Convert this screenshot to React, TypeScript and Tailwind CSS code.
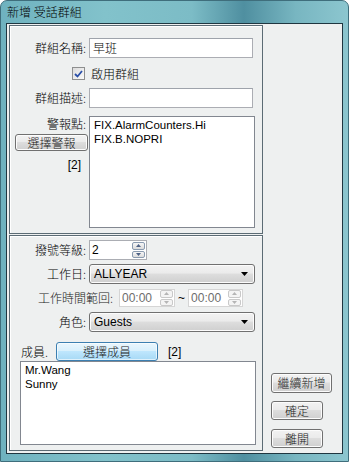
import React from 'react'

const cjk = { fontFamily: '"Noto Sans CJK TC", "Liberation Sans", sans-serif' }
const latin = { fontFamily: '"Liberation Sans", "Noto Sans CJK TC", sans-serif' }

function Btn({ children, className = '', focus = false }: { children: React.ReactNode; className?: string; focus?: boolean }) {
    return (
        <div
            className={
                'shrink-0 flex items-center justify-center rounded-[3px] border text-[12px] font-light text-[#1a1a1a] ' +
                (focus
                    ? 'border-[#3c7fb1] bg-[linear-gradient(#eaf6fd_0%,#d9f0fc_45%,#bee6fd_50%,#a7d9f5_100%)] shadow-[inset_0_0_0_1px_#ffffffa0] '
                    : 'border-[#707070] bg-[linear-gradient(#f2f2f2_0%,#ebebeb_45%,#dddddd_50%,#cfcfcf_100%)] shadow-[inset_0_0_0_1px_#fcfcfc] ') +
                className
            }
            style={cjk}
        >
            {children}
        </div>
    )
}

function Combo({ value }: { value: string }) {
    return (
        <div className="w-[166px] h-[20px] rounded-[3px] border border-[#707070] bg-[linear-gradient(#f2f2f2_0%,#ebebeb_45%,#dddddd_50%,#cfcfcf_100%)] shadow-[inset_0_0_0_1px_#fcfcfc] flex items-center pl-[4px] pr-[6px]">
            <span className="flex-1 text-[12px] text-black" style={latin}>{value}</span>
            <svg width="7" height="4" viewBox="0 0 7 4"><path d="M0 0h7L3.5 4z" fill="#000" /></svg>
        </div>
    )
}

function Spin({ disabled = false }: { disabled?: boolean }) {
    const c = disabled ? '#b5b5b5' : '#4d6185'
    const bg = disabled ? 'bg-[#f4f4f4] border-[#c9c9c9]' : 'bg-[linear-gradient(#f6f6f6,#dcdcdc)] border-[#8a9bb0]'
    return (
        <div className="flex flex-col w-[13px] h-[16px] gap-[1px]">
            <div className={'flex-1 flex items-center justify-center border rounded-[2px] ' + bg}>
                <svg width="5" height="3" viewBox="0 0 5 3"><path d="M0 3h5L2.5 0z" fill={c} /></svg>
            </div>
            <div className={'flex-1 flex items-center justify-center border rounded-[2px] ' + bg}>
                <svg width="5" height="3" viewBox="0 0 5 3"><path d="M0 0h5L2.5 3z" fill={c} /></svg>
            </div>
        </div>
    )
}

const label = 'w-[76px] text-right text-[12px] font-light text-black'

export default function App() {
    return (
        <div className="w-[349px] h-[462px] rounded-t-[7px] border border-[#3f6e7c] bg-[linear-gradient(90deg,#6fb2bf_0%,#82c2cb_30%,#7cbcc6_55%,#4f8fa0_70%,#78b6c1_85%,#8cc6cf_100%)] flex flex-col overflow-hidden">
            {/* Title */}
            <div className="h-[22px] pl-[6px] flex items-center text-[12px] font-light text-black shrink-0" style={cjk}>
                新增 受話群組
            </div>

            {/* Client area */}
            <div className="flex-1 mx-[5px] mb-[7px] border border-[#1f3640] bg-[#eef0f0] flex">
                {/* Left column */}
                <div className="ml-[2px] w-[254px] flex flex-col">
                    {/* Group 1 */}
                    <div className="shrink-0 mt-[1px] h-[209px] border border-[#5b6b74] shadow-[inset_1px_1px_0_#ffffff] flex flex-col">
                        <div className="shrink-0 flex items-center mt-[12px] h-[20px]">
                            <span className={label} style={cjk}>群組名稱:</span>
                            <div className="ml-[3px] w-[164px] h-[20px] bg-white border border-[#abadb3] border-t-[#9ea3ab] flex items-center pl-[3px] text-[12px] font-light" style={cjk}>早班</div>
                        </div>
                        <div className="shrink-0 flex items-center mt-[9px] h-[13px]">
                            <div className="ml-[62px] w-[13px] h-[13px] border border-[#8e8f8f] bg-[linear-gradient(135deg,#dcdcdc,#fafafa)] flex items-center justify-center">
                                <svg width="9" height="8" viewBox="0 0 9 8"><path d="M1 4l2.5 2.5L8 1" stroke="#2a4fa8" strokeWidth="1.8" fill="none" /></svg>
                            </div>
                            <span className="ml-[6px] text-[12px] font-light text-black" style={cjk}>啟用群組</span>
                        </div>
                        <div className="shrink-0 flex items-center mt-[8px] h-[20px]">
                            <span className={label} style={cjk}>群組描述:</span>
                            <div className="ml-[3px] w-[164px] h-[20px] bg-white border border-[#abadb3] border-t-[#9ea3ab]" />
                        </div>
                        <div className="shrink-0 flex mt-[8px]">
                            <div className="w-[79px] flex flex-col items-end">
                                <span className="mr-[3px] mt-[1px] text-[12px] font-light leading-[14px] text-black" style={cjk}>警報點:</span>
                                <Btn className="mt-[3px] mr-[1px] w-[73px] h-[17px]">選擇警報</Btn>
                                <span className="mr-[8px] mt-[5px] text-[12px] text-black" style={latin}>[2]</span>
                            </div>
                            <div className="w-[166px] h-[112px] bg-white border border-[#828790] pl-[4px] pt-[1px] text-[11.5px] leading-[14px] text-black" style={latin}>
                                <div>FIX.AlarmCounters.Hi</div>
                                <div>FIX.B.NOPRI</div>
                            </div>
                        </div>
                    </div>

                    {/* Group 2 */}
                    <div className="shrink-0 mt-[1px] h-[216px] border border-[#5b6b74] shadow-[inset_1px_1px_0_#ffffff] flex flex-col">
                        <div className="shrink-0 flex items-center mt-[4px] h-[20px]">
                            <span className={label} style={cjk}>撥號等級:</span>
                            <div className="ml-[3px] w-[58px] h-[20px] bg-white border border-[#abadb3] flex items-center pl-[2px] pr-[1px]">
                                <span className="flex-1 text-[12px]" style={latin}>2</span>
                                <Spin />
                            </div>
                        </div>
                        <div className="shrink-0 flex items-center mt-[4px] h-[20px]">
                            <span className={label} style={cjk}>工作日:</span>
                            <div className="ml-[3px]"><Combo value="ALLYEAR" /></div>
                        </div>
                        <div className="shrink-0 flex items-center mt-[5px] h-[18px]">
                            <span className="ml-[28px] text-[12px] font-light text-[#222]" style={cjk}>工作時間範回:</span>
                            <div className="ml-[6px] w-[56px] h-[18px] bg-white border border-[#d5d5d5] flex items-center pl-[2px] pr-[1px]">
                                <span className="flex-1 text-[12px] text-[#6d6d6d]" style={latin}>00:00</span>
                                <Spin disabled />
                            </div>
                            <span className="mx-[3px] text-[12px] text-black" style={latin}>~</span>
                            <div className="w-[55px] h-[18px] bg-white border border-[#d5d5d5] flex items-center pl-[2px] pr-[1px]">
                                <span className="flex-1 text-[12px] text-[#6d6d6d]" style={latin}>00:00</span>
                                <Spin disabled />
                            </div>
                        </div>
                        <div className="shrink-0 flex items-center mt-[5px] h-[20px]">
                            <span className={label} style={cjk}>角色:</span>
                            <div className="ml-[3px]"><Combo value="Guests" /></div>
                        </div>
                        <div className="shrink-0 flex items-center mt-[10px] h-[19px]">
                            <span className="ml-[11px] w-[35px] text-[12px] font-light text-black" style={cjk}>成員.</span>
                            <Btn focus className="w-[102px] h-[19px]">選擇成員</Btn>
                            <span className="ml-[10px] text-[12px] text-black" style={latin}>[2]</span>
                        </div>
                        <div className="shrink-0 ml-[10px] w-[236px] h-[84px] bg-white border border-[#828790] pl-[4px] pt-[1px] text-[11.5px] leading-[14px] text-black" style={latin}>
                            <div>Mr.Wang</div>
                            <div>Sunny</div>
                        </div>
                    </div>
                </div>

                {/* Right column */}
                <div className="ml-[8px] flex flex-col justify-end pb-[5px]">
                    <Btn className="w-[61px] h-[20px]">繼續新增</Btn>
                    <Btn className="mt-[8px] w-[52px] h-[19px]">確定</Btn>
                    <Btn className="mt-[9px] w-[52px] h-[19px]">離開</Btn>
                </div>
            </div>
        </div>
    )
}
